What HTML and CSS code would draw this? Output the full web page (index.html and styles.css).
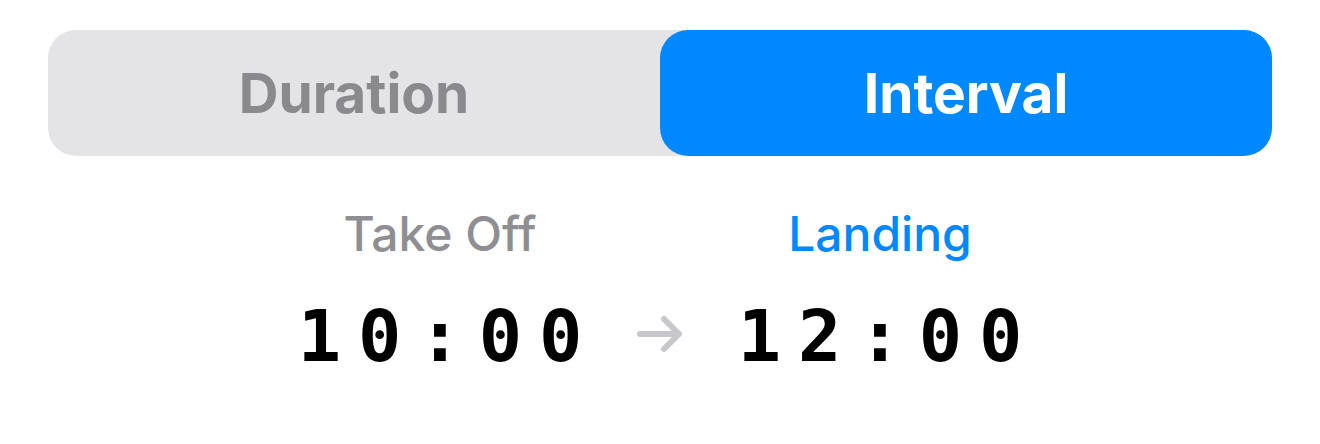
FILE: index.html
```html
<!DOCTYPE html>
<html lang="en">
<head>
    <meta charset="UTF-8">
    <title>Flight Time</title>
    <link rel="stylesheet" href="styles.css">
</head>
<body>
    <div class="segmented">
        <button class="segment">Duration</button>
        <button class="segment active">Interval</button>
    </div>
    <div class="times">
        <div class="time-col">
            <span class="time-label">Take Off</span>
            <span class="time-value">10:00</span>
        </div>
        <div class="arrow">
            <svg width="48" height="38" viewBox="0 0 48 38">
                <path d="M4 19 H43 M28 4 L43 19 L28 34" fill="none" stroke="#c7c7cc" stroke-width="6" stroke-linecap="round" stroke-linejoin="round"/>
            </svg>
        </div>
        <div class="time-col">
            <span class="time-label selected">Landing</span>
            <span class="time-value">12:00</span>
        </div>
    </div>
</body>
</html>
```

FILE: styles.css
```css
body {
    margin: 0;
    background: #fff;
    font-family: Inter, "Noto Sans", sans-serif;
}
.segmented {
    display: flex;
    margin: 30px 48px 0;
    height: 126px;
    background-color: #e4e4e7;
    border-radius: 28px;
}
.segment {
    flex: 1;
    border: none;
    background: none;
    border-radius: 28px;
    font-family: inherit;
    font-size: 55px;
    font-weight: 700;
    color: #8a8a8e;
    padding: 0;
}
.segment.active {
    background-color: #0088ff;
    color: #fff;
}
.times {
    display: flex;
    justify-content: center;
    align-items: flex-end;
    gap: 46px;
    margin-top: 49px;
}
.time-col {
    width: 300px;
    display: flex;
    flex-direction: column;
    align-items: center;
}
.time-label {
    font-size: 48px;
    font-weight: 500;
    color: #8e8e93;
    line-height: 1.2;
}
.time-label.selected {
    color: #0088ff;
}
.time-value {
    margin-top: 37px;
    font-family: "DejaVu Sans Mono", monospace;
    font-size: 72px;
    font-weight: 700;
    letter-spacing: 17px;
    margin-right: -17px;
    line-height: 1;
    color: #000;
}
.arrow {
    display: flex;
    padding-bottom: 19px;
}
```
